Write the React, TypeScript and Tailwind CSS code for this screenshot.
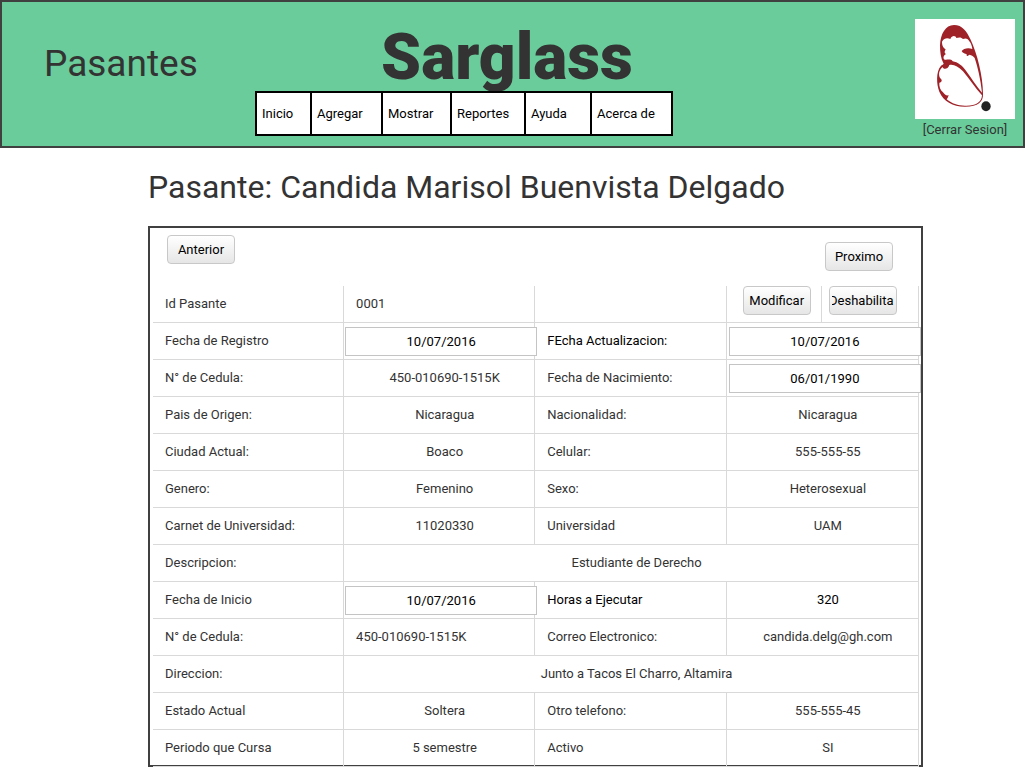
import type { ReactNode } from "react";

const menu = [
  { label: "Inicio", width: "w-[55px]" },
  { label: "Agregar", width: "w-[71px]" },
  { label: "Mostrar", width: "w-[69px]" },
  { label: "Reportes", width: "w-[74px]" },
  { label: "Ayuda", width: "w-[66px]" },
  { label: "Acerca de", width: "w-[79px]" },
];

type Field = {
  label: string;
  value: string;
  id?: string;
  strong?: boolean;
  strongValue?: boolean;
  left?: boolean;
};

const rows: Field[][] = [
  [
    { label: "Fecha de Registro", value: "10/07/2016", id: "registro" },
    { label: "FEcha Actualizacion:", value: "10/07/2016", id: "actualizacion", strong: true },
  ],
  [
    { label: "N° de Cedula:", value: "450-010690-1515K" },
    { label: "Fecha de Nacimiento:", value: "06/01/1990", id: "nacimiento" },
  ],
  [
    { label: "Pais de Origen:", value: "Nicaragua" },
    { label: "Nacionalidad:", value: "Nicaragua" },
  ],
  [
    { label: "Ciudad Actual:", value: "Boaco" },
    { label: "Celular:", value: "555-555-55" },
  ],
  [
    { label: "Genero:", value: "Femenino" },
    { label: "Sexo:", value: "Heterosexual" },
  ],
  [
    { label: "Carnet de Universidad:", value: "11020330" },
    { label: "Universidad", value: "UAM" },
  ],
  [{ label: "Descripcion:", value: "Estudiante de Derecho" }],
  [
    { label: "Fecha de Inicio", value: "10/07/2016", id: "inicio" },
    { label: "Horas a Ejecutar", value: "320", strong: true, strongValue: true },
  ],
  [
    { label: "N° de Cedula:", value: "450-010690-1515K", left: true },
    { label: "Correo Electronico:", value: "candida.delg@gh.com" },
  ],
  [{ label: "Direccion:", value: "Junto a Tacos El Charro, Altamira" }],
  [
    { label: "Estado Actual", value: "Soltera" },
    { label: "Otro telefono:", value: "555-555-45" },
  ],
  [
    { label: "Periodo que Cursa", value: "5 semestre" },
    { label: "Activo", value: "SI" },
  ],
];

const cell = "h-[37px] border-r border-b border-[#d9d9d9]";
const labelCell = "h-[37px] border-r border-b border-[#d9d9d9] px-3 text-left font-normal";

function Button({ children }: { children: ReactNode }) {
  return (
    <button
      type="button"
      className="flex h-[29px] w-[68px] items-center justify-center rounded border border-[#c8c8c8] bg-linear-to-b from-white to-[#e6e6e6] px-0.5 text-black"
    >
      <span className="flex w-full justify-center overflow-hidden">
        <span className="shrink-0">{children}</span>
      </span>
    </button>
  );
}

function Logo() {
  return (
    <svg viewBox="0 0 300 300" className="size-[100px] bg-white" role="img" aria-label="Sarglass">
      <path
        fill="#9e2228"
        fillRule="evenodd"
        d="M117 18 C142 18 155 37 167 62 C186 103 204 170 204 225 C205 248 190 263 150 263 C112 262 86 247 73 218 C64 196 63 158 77 142 C79 138 84 137 86 134 C77 118 75 98 75 78 C77 45 91 18 117 18 Z
           M81 68 C88 55 99 57 106 60 C111 48 122 50 124 57 C133 54 140 55 144 60 C152 56 160 59 163 67 C168 73 171 81 172 90 C157 85 145 90 140 96 C142 102 149 104 155 105 C153 112 159 113 162 107 C171 108 176 112 179 117 C188 143 197 183 201 221 C185 202 170 178 155 158 C142 140 128 129 113 127 C108 119 98 123 89 122 C82 117 87 108 93 105 C86 102 90 95 92 91 C86 86 81 82 81 68 Z
           M83 144 C84 152 99 152 103 138 C116 135 129 142 144 157 C163 179 179 206 201 229 C200 250 183 260 155 260 C131 261 112 255 95 241 C99 237 99 233 101 229 C93 231 89 226 84 220 C76 214 72 202 73 191 C81 190 83 182 75 177 C69 166 73 152 83 144 Z"
      />
      <ellipse cx="213" cy="262" rx="14" ry="15" fill="#222222" />
    </svg>
  );
}

function Value({ field, index, wide }: { field: Field; index: number; wide: boolean }) {
  if (field.id) {
    return (
      <td colSpan={index === 1 ? 2 : 1} className={`${cell} ${index === 1 ? "pl-0.5" : "pl-px"}`}>
        <input
          id={field.id}
          defaultValue={field.value}
          className="block h-[29px] w-[calc(100%+3px)] border border-[#c4c4c4] bg-white text-center text-black"
        />
      </td>
    );
  }
  const span = wide ? 4 : index === 1 ? 2 : 1;
  return (
    <td
      colSpan={span}
      className={`${cell} pr-px pl-3 ${field.left ? "text-left" : "text-center"} ${field.strongValue ? "text-black" : ""}`}
    >
      {field.value}
    </td>
  );
}

export default function App() {
  return (
    <div className="bg-white font-[Roboto,sans-serif] text-[13px] leading-5 text-[#333333]">
      <header className="flex h-[148px] justify-between border-2 border-[#404040] bg-[#69cc9a]">
        <div className="flex flex-1">
          <h2 className="w-[253px] shrink-0 pt-[39px] pl-[42px] text-[37px] leading-[46px]">Pasantes</h2>
          <div>
            <h1 className="h-[89px] pt-5 pl-[86px] text-center text-[64px] leading-[72px] font-black">Sarglass</h1>
            <nav className="relative flex h-[45px] divide-x-2 divide-black border-2 border-black bg-white text-black">
              {menu.map((item) => (
                <a key={item.label} href="#" className={`flex items-center pl-[5px] ${item.width}`}>
                  {item.label}
                </a>
              ))}
            </nav>
          </div>
        </div>
        <div className="flex flex-col items-center gap-px pt-[17px] pr-2">
          <Logo />
          <a href="#">[Cerrar Sesion]</a>
        </div>
      </header>

      <main className="mr-[102px] ml-[148px]">
        <h2 className="pt-[19px] pb-[19px] text-[32px] leading-10">Pasante: Candida Marisol Buenvista Delgado</h2>
        <section className="border-2 border-[#404040] pr-0.5 pl-[3px]">
          <div className="flex h-[58px] justify-between pt-[7px] pr-[26px] pl-[14px]">
            <Button>Anterior</Button>
            <div className="pt-[7px]">
              <Button>Proximo</Button>
            </div>
          </div>
          <table className="-mb-0.5 w-full table-fixed border-separate border-spacing-0">
            <colgroup>
              <col className="w-[24.95%]" />
              <col className="w-[24.95%]" />
              <col className="w-[25%]" />
              <col className="w-[12.5%]" />
              <col />
            </colgroup>
            <tbody>
              <tr>
                <th scope="row" className={labelCell}>Id Pasante</th>
                <td className={`${cell} px-3`}>0001</td>
                <td className={cell} />
                <td className={`${cell} pl-4 align-top`}>
                  <Button>Modificar</Button>
                </td>
                <td className={`${cell} pl-[7px] align-top`}>
                  <Button>Deshabilitar</Button>
                </td>
              </tr>
              {rows.map((fields, r) => (
                <tr key={r}>
                  {fields.map((field, i) => [
                    <th key="label" scope="row" className={`${labelCell} ${field.strong ? "text-black" : ""}`}>
                      {field.id ? <label htmlFor={field.id}>{field.label}</label> : field.label}
                    </th>,
                    <Value key="value" field={field} index={i} wide={fields.length === 1} />,
                  ])}
                </tr>
              ))}
            </tbody>
          </table>
        </section>
      </main>
    </div>
  );
}
